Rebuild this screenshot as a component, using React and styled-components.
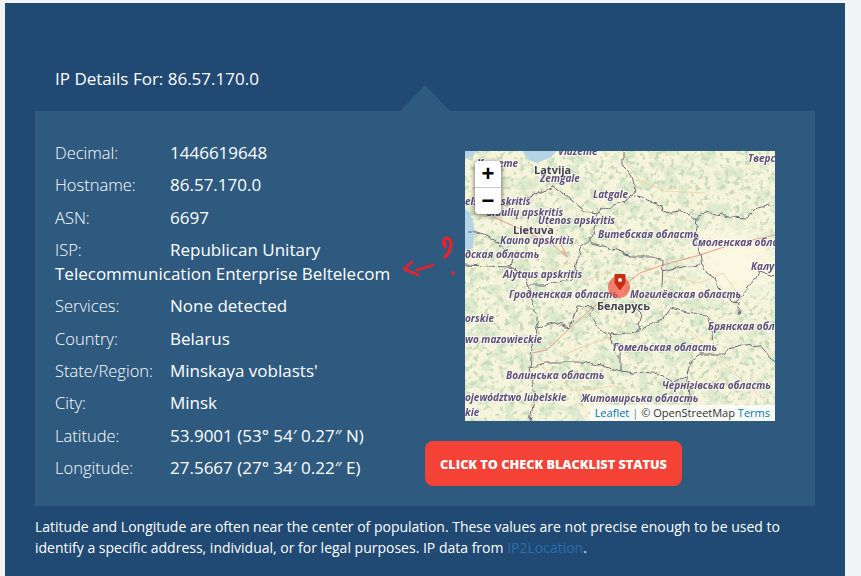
import React from 'react'
import styled, { createGlobalStyle } from 'styled-components'

const GlobalStyle = createGlobalStyle`
    html, body {
        margin: 0;
        height: 100%;
        overflow: hidden;
        background: #f3f4f6;
        font-family: "Open Sans", "Liberation Sans", sans-serif;
    }
`;

const Page = styled.div`
    padding: 3px 16px 0 5px;
`;
const Section = styled.section`
    box-sizing: border-box;
    height: calc(100vh - 3px);
    background: #204a73;
    padding-top: 64px;
    color: #fff;
`;
const Title = styled.h2`
    margin: 0 0 20px 50px;
    font-size: 17px;
    line-height: 24px;
    font-weight: 400;
`;
const Panel = styled.div`
    position: relative;
    display: flex;
    margin: 0 30px;
    padding: 30px 40px 20px 20px;
    background: #2e5a80;
    &::before {
        content: '';
        position: absolute;
        left: 365px;
        top: -26px;
        border-left: 25px solid transparent;
        border-right: 25px solid transparent;
        border-bottom: 26px solid #2e5a80;
    }
`;
const Details = styled.div`
    width: 370px;
    flex: none;
`;
const Row = styled.div`
    font-size: 17px;
    line-height: 24px;
    margin-bottom: 8.33px;
    &:last-child {
        margin-bottom: 0;
    }
`;
const Label = styled.span`
    display: inline-block;
    width: 115px;
    font-size: 16.5px;
    font-weight: 300;
`;
const Side = styled.div`
    display: flex;
    flex-direction: column;
    align-items: flex-end;
    gap: 20px;
    width: 350px;
    margin-top: 10px;
`;
const MapBox = styled.div`
    position: relative;
    width: 310px;
    height: 270px;
    overflow: hidden;
    background: #f6f4da;
`;
const MapSvg = styled.svg`
    display: block;
    filter: blur(0.3px);
`;
const ZoomControl = styled.div`
    position: absolute;
    left: 10px;
    top: 10px;
    width: 26px;
    background: #fff;
    border-radius: 4px;
    box-shadow: 0 1px 5px rgba(0, 0, 0, 0.65);
`;
const ZoomButton = styled.div`
    height: 26px;
    text-align: center;
    font: bold 22px/26px "Liberation Sans", sans-serif;
    color: #000;
    & + & {
        border-top: 1px solid #ccc;
    }
`;
const Attribution = styled.div`
    position: absolute;
    right: 0;
    bottom: 0;
    padding: 0 5px;
    background: rgba(255, 255, 255, 0.8);
    color: #333;
    font: 11px/16px "Open Sans", sans-serif;
    white-space: nowrap;
    a {
        color: #0078a8;
        text-decoration: none;
    }
`;
const Separator = styled.span`
    margin: 0 3px;
    color: #777;
`;
const MapLabel = styled.text`
    font-family: "Open Sans", sans-serif;
    font-size: ${p => p.$strong ? 11 : 10}px;
    font-style: ${p => p.$strong ? 'normal' : 'italic'};
    font-weight: 700;
    fill: ${p => p.$strong ? '#45404e' : '#5e4e7a'};
    stroke: rgba(255, 255, 255, 0.55);
    stroke-width: 2px;
    paint-order: stroke;
`;
const CheckButton = styled.button`
    align-self: flex-start;
    width: 257px;
    height: 45px;
    border: 0;
    border-radius: 8px;
    padding: 0;
    background: #f44336;
    color: #fff;
    font-family: "Open Sans", sans-serif;
    font-size: 12.7px;
    font-weight: 800;
    text-transform: uppercase;
`;
const Note = styled.p`
    margin: 10px 30px 0;
    font-size: 14px;
    line-height: 21px;
    a {
        color: #2a6cb0;
        text-decoration: none;
    }
`;
const Scribble = styled.svg`
    position: absolute;
    left: 365px;
    top: 124px;
    pointer-events: none;
`;

const rows = [
    ['Decimal:', '1446619648'],
    ['Hostname:', '86.57.170.0'],
    ['ASN:', '6697'],
    ['ISP:', 'Republican Unitary Telecommunication Enterprise Beltelecom'],
    ['Services:', 'None detected'],
    ['Country:', 'Belarus'],
    ['State/Region:', "Minskaya voblasts'"],
    ['City:', 'Minsk'],
    ['Latitude:', '53.9001 (53° 54′ 0.27″ N)'],
    ['Longitude:', '27.5667 (27° 34′ 0.22″ E)'],
]

// only the part of each name that shows inside the tile
const labels = [
    ['Vidzeme', 93, 4],
    ['Kurzeme', 12, 16],
    ['Тверс', 283, 11],
    ['Zemgale', 75, 31],
    ['Latgale', 128, 47],
    ['els', 0, 54],
    ['skritis', 36, 54],
    ['Šiaulių apskritis', 22, 65],
    ['Utenos apskritis', 73, 73],
    ['Kauno apskritis', 35, 93],
    ['Витебская область', 133, 87],
    ['Смоленская обла', 227, 95],
    ['Калу', 286, 119],
    ['дская область', 0, 107],
    ['Alytaus apskritis', 38, 127],
    ['Гродненская область', 44, 147],
    ['Могилёвская область', 165, 147],
    ['orskie', 0, 171],
    ['Брянская обл', 243, 179],
    ['wo mazowieckie', 0, 192],
    ['Гомельская область', 148, 200],
    ['Волинська область', 41, 228],
    ['Чернігівська область', 197, 238],
    ['ojewództwo lubelskie', 0, 250],
    ['Житомирська область', 116, 251],
    ['kie', 0, 265],
]

const countries = [
    ['Latvija', 69, 23],
    ['Lietuva', 48, 83],
    ['Беларусь', 132, 159],
]

const borders = [
    'M158 0 L158 15 L165 22 L170 42 L160 50 L145 56 L130 62 L132 69 L128 87',
    'M10 58 L50 52 L88 36 L100 44 L120 60 L130 62',
    'M170 45 L185 50 L197 54 L198 61 L215 59 L230 67 L233 67 L232 77 L230 87 L235 104 L237 114 L242 122 L252 129 L253 137 L267 151 L275 152 L273 164',
    'M233 66 L243 61 L265 66 L282 67 L292 57 L310 54',
    'M310 125 L295 121 L290 131 L282 137 L275 147 L268 152',
    'M155 100 L165 106 L188 106 L198 109 L197 137',
    'M197 120 L205 118 L225 115 L235 114',
    'M125 87 L127 92 L158 101 L165 106',
    'M128 87 L115 96 L112 111 L107 129 L92 131 L80 134 L63 134 L62 129 L50 118 L45 116 L0 114',
    'M2 81 L13 81 L32 91 L47 105 L45 116',
    'M63 134 L72 167 L73 177 L67 197 L65 217 L70 244 L65 270',
    'M73 177 L88 172 L105 176 L112 156 L130 157 L125 164 L132 176 L145 184 L148 192 L155 197 L155 220',
    'M65 217 L82 211 L118 211 L145 217 L155 220 L168 222 L188 220 L208 231 L222 226 L225 211 L235 204 L258 204 L265 196 L295 194 L310 212',
    'M145 184 L172 181 L178 177 L198 167 L205 157 L222 161 L242 164 L247 184 L248 194',
    'M172 181 L177 164 L165 152',
    'M222 226 L225 244 L222 267',
]

const roads = [
    'M310 84 L265 94 L235 104 L198 114 L175 122 L162 132',
    'M142 147 L128 156 L105 177 L82 199 L67 202',
    'M13 59 L35 69 L62 81 L88 94 L102 106 L93 87',
]

const minorRoads = [
    'M158 8 L175 30 L200 40 L240 42',
    'M200 125 L235 132 L258 122 L285 160',
    'M75 125 L105 112 L120 130 L150 118',
    'M70 210 L110 240 L150 235 L190 262',
    'M225 180 L262 215 L300 250',
    'M160 165 L150 185 L120 195 L95 205',
]

function MapArt() {
    return (
        <MapSvg width="310" height="270" viewBox="0 0 310 270">
            <defs>
                <filter id="forest" x="0" y="0" width="100%" height="100%">
                    <feTurbulence type="fractalNoise" baseFrequency="0.075" numOctaves="5" seed="11" />
                    <feColorMatrix type="matrix" values="0 0 0 0 0.72  0 0 0 0 0.82  0 0 0 0 0.62  0 0 0 6 -2.9" />
                </filter>
                <filter id="speckle" x="0" y="0" width="100%" height="100%">
                    <feTurbulence type="fractalNoise" baseFrequency="0.2" numOctaves="3" seed="5" />
                    <feColorMatrix type="matrix" values="0 0 0 0 0.58  0 0 0 0 0.71  0 0 0 0 0.5  0 0 0 7 -3.9" />
                </filter>
                <filter id="soft">
                    <feGaussianBlur stdDeviation="12" />
                </filter>
                <filter id="jagged" x="-5%" y="-5%" width="110%" height="110%">
                    <feTurbulence type="fractalNoise" baseFrequency="0.12" numOctaves="2" seed="3" />
                    <feDisplacementMap in="SourceGraphic" scale="6" xChannelSelector="R" yChannelSelector="G" />
                </filter>
            </defs>
            <rect width="310" height="270" fill="#f6f4da" />
            <rect width="310" height="270" filter="url(#forest)" />
            <rect width="310" height="270" filter="url(#speckle)" />
            <ellipse cx="270" cy="112" rx="42" ry="36" fill="#faf8e2" filter="url(#soft)" />
            <path d="M58 0 L92 0 L86 6 L72 12 L62 8 Z" fill="#b4d3e6" />
            <path d="M0 58 L5 62 L10 80 L8 97 L0 100 Z" fill="#b4d3e6" />
            <path d="M0 0 L12 0 L6 6 L0 8 Z" fill="#b4d3e6" />
            <g fill="none" stroke="#f3d3a8" strokeWidth="0.9">
                {minorRoads.map((d, i) => <path key={i} d={d} />)}
            </g>
            <g fill="none" stroke="#ee8f7f" strokeWidth="0.9">
                {roads.map((d, i) => <path key={i} d={d} />)}
            </g>
            <g fill="none" stroke="#716c7c" strokeWidth="1" filter="url(#jagged)">
                {borders.map((d, i) => <path key={i} d={d} />)}
            </g>
            {labels.map(([text, x, y]) => <MapLabel key={text} x={x} y={y}>{text}</MapLabel>)}
            {countries.map(([text, x, y]) => <MapLabel key={text} $strong x={x} y={y}>{text}</MapLabel>)}
            <circle cx="154" cy="136" r="11" fill="#f44336" fillOpacity="0.65" />
            <path d="M149.5 124 Q149.5 123 150.5 123 L159.5 123 Q160.5 123 160.5 124 L160.5 132 L155.5 139 L154.5 139 L149.5 132 Z" fill="#c42d12" />
            <circle cx="155" cy="129" r="1.9" fill="#fff" />
        </MapSvg>
    )
}

function App() {
    return (
        <Page>
            <GlobalStyle />
            <Section>
                <Title>IP Details For: 86.57.170.0</Title>
                <Panel>
                    <Details>
                        {rows.map(([label, value]) => (
                            <Row key={label}><Label>{label}</Label>{value}</Row>
                        ))}
                    </Details>
                    <Side>
                        <MapBox>
                            <MapArt />
                            <ZoomControl>
                                <ZoomButton>+</ZoomButton>
                                <ZoomButton>−</ZoomButton>
                            </ZoomControl>
                            <Attribution>
                                <a href="#leaflet">Leaflet</a><Separator>|</Separator>© OpenStreetMap <a href="#terms">Terms</a>
                            </Attribution>
                        </MapBox>
                        <CheckButton>Click to check blacklist status</CheckButton>
                    </Side>
                    <Scribble width="60" height="50" viewBox="0 0 60 50">
                        <g fill="none" stroke="#e8212b" strokeLinecap="round" strokeLinejoin="round">
                            <path strokeWidth="2.6" d="M12 27 L4 34 L18 40" />
                            <path strokeWidth="2.6" d="M17 35 L33 30" />
                            <path strokeWidth="3.2" d="M44 10 C43 5 45 3 47 3 C51 4 52 9 50 14 C49 18 47 20 45 22" />
                            <path strokeWidth="3.2" d="M44 6 L45 12" />
                        </g>
                        <circle cx="53" cy="38" r="1.9" fill="#e8212b" />
                    </Scribble>
                </Panel>
                <Note>
                    Latitude and Longitude are often near the center of population. These values are not precise enough to be used to identify a specific address, individual, or for legal purposes. IP data from <a href="#ip2location">IP2Location</a>.
                </Note>
            </Section>
        </Page>
    )
}

export default App
